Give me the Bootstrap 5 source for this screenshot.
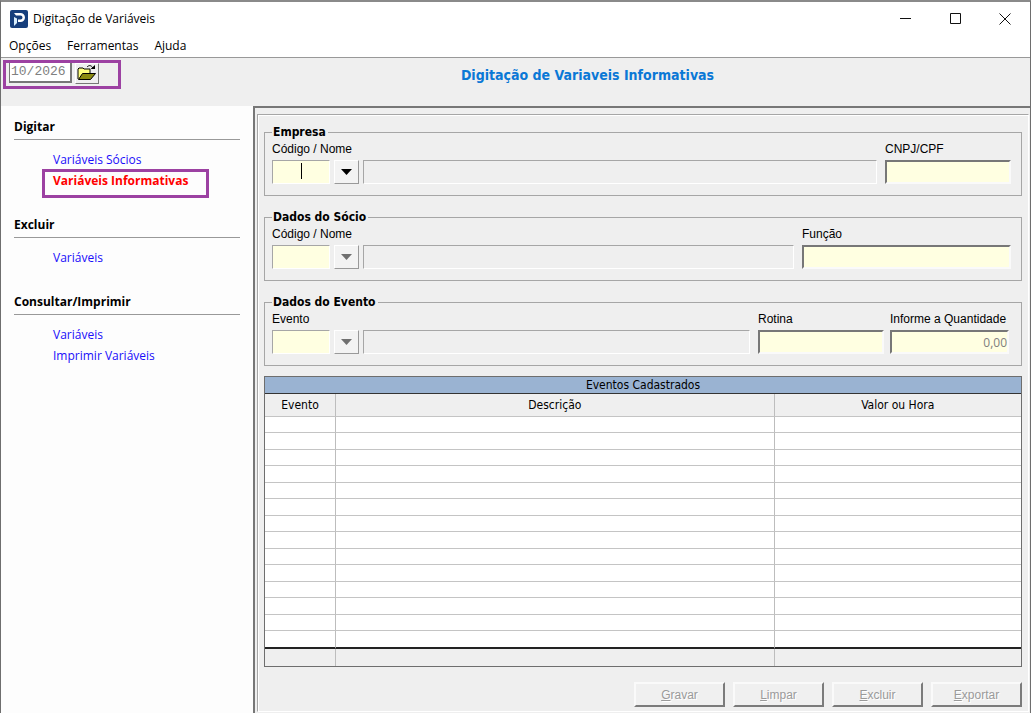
<!DOCTYPE html>
<html lang="pt-BR">
<head>
<meta charset="utf-8">
<meta name="viewport" content="width=device-width, initial-scale=1">
<title>Digitação de Variáveis</title>
<link href="https://cdn.jsdelivr.net/npm/bootstrap@5.3.0/dist/css/bootstrap.min.css" rel="stylesheet">
<style>
  :root { --face: #efefef; --mark: #9c41a2; --line: #a6a6a6; }
  body { font: 12px/16px "Open Sans", "Noto Sans", sans-serif; color: #000; background: var(--face); }
  button, input { font: inherit; border-radius: 0; }
  .app-window { border: 1px solid #6e6e6e; border-top: 2px solid #8a8a8a; border-bottom: 0; }
  .titlebar { height: 33px; padding: 0 0 0 9px; gap: 5px; }
  .caption-btn { width: 50px; height: 32px; padding: 0; border: 0; background: none; display: grid; place-items: center; }
  .menubar { height: 23px; padding-left: 8px; gap: 16px; border-bottom: 1px solid #999; }
  .menubar a { color: #000; text-decoration: none; line-height: 22px; }
  .toolbar { height: 48px; padding: 2px; background: var(--face); }
  .period-box { width: 118px; height: 29px; border: 3px solid var(--mark); padding: 0 3px; gap: 3px; }
  .period-box input { width: 63px; height: 20px; border: 1px solid #777; border-width: 0 2px 2px 1px; padding: 0 0 1px 1px; background: #fff; color: #808080; font: 13px/16px "Liberation Mono", monospace; }
  .open-btn { width: 24px; height: 21px; padding: 0; background: var(--face); border: 1px solid #fff; border-right-color: #777; border-bottom-color: #777; }
  .page-title { font: bold 14px/18px "DejaVu Sans Condensed", "DejaVu Sans", sans-serif; color: #0a78d6; padding: 6px 0 0 26px; }
  .side { width: 252px; padding: 12px 13px 0; background: #fdfdfd; }
  .side h2 { font: bold 12px/18px "Open Sans", sans-serif; margin: 0 0 11px; padding-bottom: 3px; border-bottom: 1px solid #999; }
  .side ul { margin: 0 0 23px; padding-left: 39px; }
  .side li { height: 21px; }
  .side a { color: #1a0dfa; text-decoration: none; line-height: 18px; display: block; }
  .side a.current { color: #f00; font-weight: bold; border: 3px solid var(--mark); width: 167px; height: 29px; margin: 0 0 -8px -11px; padding-left: 8px; position: relative; top: -3px; }
  .work { border: 2px solid #777; border-width: 2px 0 0 2px; padding: 6px 1px 1px 2px; min-width: 0; }
  .panel { border: 1px solid var(--line); border-right-color: #fff; border-bottom-color: #fff; box-shadow: inset 1px 1px #fff; padding: 9px 6px 4px 6px; }
  fieldset { border: 1px solid var(--line); padding: 0 10px 11px 7px; margin-bottom: 13px; }
  fieldset:last-of-type { margin-bottom: 10px; }
  legend { font: bold 12px/17px "DejaVu Sans Condensed", "DejaVu Sans", sans-serif; height: 17px; padding: 0 2px 0 1px; }
  .lbl, .cmd { font: 12px/16px "Liberation Sans", sans-serif; }
  .lbl { display: block; margin-bottom: 3px; white-space: nowrap; }
  .fld { height: 24px; border: 1px solid var(--line); border-right-color: #fff; border-bottom-color: #fff; background: var(--face); width: 100%; display: block; padding: 0 4px; min-width: 0; }
  .entry { background: #ffffe1; }
  .code { width: 58px; }
  .deep { border: 2px solid #777; border-right-color: #fafafa; border-bottom-color: #fafafa; color: #808080; text-align: right; padding: 0; }
  .drop { width: 25px; height: 24px; flex: none; padding: 0; background: #f3f3f3; border: 1px solid #fff; border-right-color: #999; border-bottom-color: #999; display: grid; place-items: center; }
  .drop:disabled { color: #707070; }
  .caret-bar { position: absolute; left: 29px; top: 3px; width: 1px; height: 16px; background: #000; }
  .w-doc { width: 126px; } .w-role { width: 209px; } .w-qty { width: 119px; margin: 0 2px 0 6px; }
  .events { width: 100%; table-layout: fixed; border: 1px solid #6e6e6e; border-collapse: separate; border-spacing: 0; background: #fff; }
  .events th, .events td { padding: 0; font: 12px/14px "DejaVu Sans Condensed", "DejaVu Sans", sans-serif; text-align: center; border-right: 1px solid #bdbdbd; border-bottom: 1px solid #c4c4c4; }
  .events tr > :last-child { border-right: 0; }
  .events .band th { background: #9ab3d2; border-bottom: 1px solid #333; height: 17px; }
  .events .heads th { background: var(--face); height: 23px; }
  .events tbody td { height: 16px; }
  .events tbody tr:nth-child(even) td { height: 17px; }
  .events tbody tr:last-child td { border-bottom: 2px solid #222; height: 18px; }
  .events tfoot td { background: var(--face); height: 17px; border-bottom: 0; }
  .cmd { width: 91px; height: 25px; padding: 0; color: #9a9a9a; background: #f0f0f0; border: 2px solid #fafafa; border-right-color: #7b7b7b; border-bottom-color: #7b7b7b; text-shadow: 1px 1px #fff; }
</style>
</head>
<body>
<div class="app-window d-flex flex-column min-vh-100">
  <header class="bg-white">
    <div class="titlebar d-flex align-items-center">
      <svg width="18" height="18" viewBox="0 0 18 18" aria-hidden="true"><rect width="18" height="18" rx="2" fill="#173f7c"/><path d="M4 3h6.500a4.500 4.500 0 0 1 0 9H8V9.500h2.500a2 2 0 0 0 0-4H6z" fill="#fff"/><path d="M4 7l3 1.500V13l-3 3z" fill="#d9eefc"/></svg>
      <span>Digitação de Variáveis</span>
      <div class="ms-auto d-flex">
        <button class="caption-btn" aria-label="Minimizar"><svg width="11" height="11"><path d="M0 5.500h11" stroke="#111"/></svg></button>
        <button class="caption-btn" aria-label="Maximizar"><svg width="11" height="11"><path d="M.5.5h10v10H.5z" fill="none" stroke="#111"/></svg></button>
        <button class="caption-btn" aria-label="Fechar"><svg width="12" height="12"><path d="M.5.5l11 11M11.500.5l-11 11" stroke="#111"/></svg></button>
      </div>
    </div>
    <nav class="menubar d-flex"><a href="#">Opções</a><a href="#">Ferramentas</a><a href="#">Ajuda</a></nav>
  </header>
  <div class="toolbar d-flex">
    <div class="period-box d-flex">
      <input type="text" value="10/2026" aria-label="Período">
      <button class="open-btn d-flex" aria-label="Abrir"><svg width="21" height="19" viewBox="0 0 21 19"><path d="M2 15V5l1-1h4l1 1h6v4" fill="#ffff80" stroke="#000"/><path d="M2.500 15.500l4-6h13l-5 6z" fill="#8a8a10" stroke="#000"/><path d="M11 3c2-2 4-2 6 1" fill="none" stroke="#000"/><path d="M14.500 5H19V1z"/></svg></button>
    </div>
    <h1 class="page-title m-0 flex-grow-1 text-center">Digitação de Variaveis Informativas</h1>
  </div>
  <div class="d-flex flex-grow-1">
    <aside class="side flex-shrink-0">
      <h2>Digitar</h2>
      <ul class="list-unstyled"><li><a href="#">Variáveis Sócios</a></li><li><a class="current" href="#">Variáveis Informativas</a></li></ul>
      <h2>Excluir</h2>
      <ul class="list-unstyled"><li><a href="#">Variáveis</a></li></ul>
      <h2>Consultar/Imprimir</h2>
      <ul class="list-unstyled"><li><a href="#">Variáveis</a></li><li><a href="#">Imprimir Variáveis</a></li></ul>
    </aside>
    <main class="work flex-grow-1 d-flex">
      <form class="panel flex-grow-1 d-flex flex-column">
        <fieldset>
          <legend class="float-none w-auto mb-0">Empresa</legend>
          <div class="d-flex align-items-end">
            <div class="code flex-shrink-0"><label class="lbl" for="emp">Código / Nome</label><div class="position-relative"><input class="fld entry" id="emp"><span class="caret-bar"></span></div></div>
            <button type="button" class="drop ms-1" aria-label="Escolher empresa"><svg width="11" height="6"><path d="M0 0h11L5.500 6z" fill="currentColor"/></svg></button>
            <input class="fld ms-1 me-2" aria-label="Nome da empresa" disabled>
            <div class="w-doc flex-shrink-0"><label class="lbl" for="doc">CNPJ/CPF</label><input class="fld entry deep" id="doc"></div>
          </div>
        </fieldset>
        <fieldset>
          <legend class="float-none w-auto mb-0">Dados do Sócio</legend>
          <div class="d-flex align-items-end">
            <div class="code flex-shrink-0"><label class="lbl" for="soc">Código / Nome</label><input class="fld entry" id="soc"></div>
            <button type="button" class="drop ms-1" aria-label="Escolher sócio" disabled><svg width="11" height="6"><path d="M0 0h11L5.500 6z" fill="currentColor"/></svg></button>
            <input class="fld ms-1 me-2" aria-label="Nome do sócio" disabled>
            <div class="w-role flex-shrink-0"><label class="lbl" for="role">Função</label><input class="fld entry deep" id="role"></div>
          </div>
        </fieldset>
        <fieldset>
          <legend class="float-none w-auto mb-0">Dados do Evento</legend>
          <div class="d-flex align-items-end">
            <div class="code flex-shrink-0"><label class="lbl" for="evt">Evento</label><input class="fld entry" id="evt"></div>
            <button type="button" class="drop ms-1" aria-label="Escolher evento" disabled><svg width="11" height="6"><path d="M0 0h11L5.500 6z" fill="currentColor"/></svg></button>
            <input class="fld ms-1 me-2" aria-label="Nome do evento" disabled>
            <div class="w-doc flex-shrink-0"><label class="lbl" for="rot">Rotina</label><input class="fld entry deep" id="rot"></div>
            <div class="w-qty flex-shrink-0"><label class="lbl" for="qty">Informe a Quantidade</label><input class="fld entry deep" id="qty" value="0,00"></div>
          </div>
        </fieldset>
        <table class="events">
          <colgroup><col style="width: 9.4%"><col style="width: 58%"><col></colgroup>
          <thead>
            <tr class="band"><th colspan="3">Eventos Cadastrados</th></tr>
            <tr class="heads"><th>Evento</th><th>Descrição</th><th>Valor ou Hora</th></tr>
          </thead>
          <tbody>
            <tr><td></td><td></td><td></td></tr><tr><td></td><td></td><td></td></tr>
            <tr><td></td><td></td><td></td></tr><tr><td></td><td></td><td></td></tr>
            <tr><td></td><td></td><td></td></tr><tr><td></td><td></td><td></td></tr>
            <tr><td></td><td></td><td></td></tr><tr><td></td><td></td><td></td></tr>
            <tr><td></td><td></td><td></td></tr><tr><td></td><td></td><td></td></tr>
            <tr><td></td><td></td><td></td></tr><tr><td></td><td></td><td></td></tr>
            <tr><td></td><td></td><td></td></tr><tr><td></td><td></td><td></td></tr>
          </tbody>
          <tfoot><tr><td></td><td></td><td></td></tr></tfoot>
        </table>
        <div class="d-flex justify-content-end gap-2 mt-auto">
          <button type="button" class="cmd" disabled><u>G</u>ravar</button>
          <button type="button" class="cmd" disabled><u>L</u>impar</button>
          <button type="button" class="cmd" disabled><u>E</u>xcluir</button>
          <button type="button" class="cmd" disabled><u>E</u>xportar</button>
        </div>
      </form>
    </main>
  </div>
</div>
<script src="https://cdn.jsdelivr.net/npm/bootstrap@5.3.0/dist/js/bootstrap.bundle.min.js"></script>
</body>
</html>
